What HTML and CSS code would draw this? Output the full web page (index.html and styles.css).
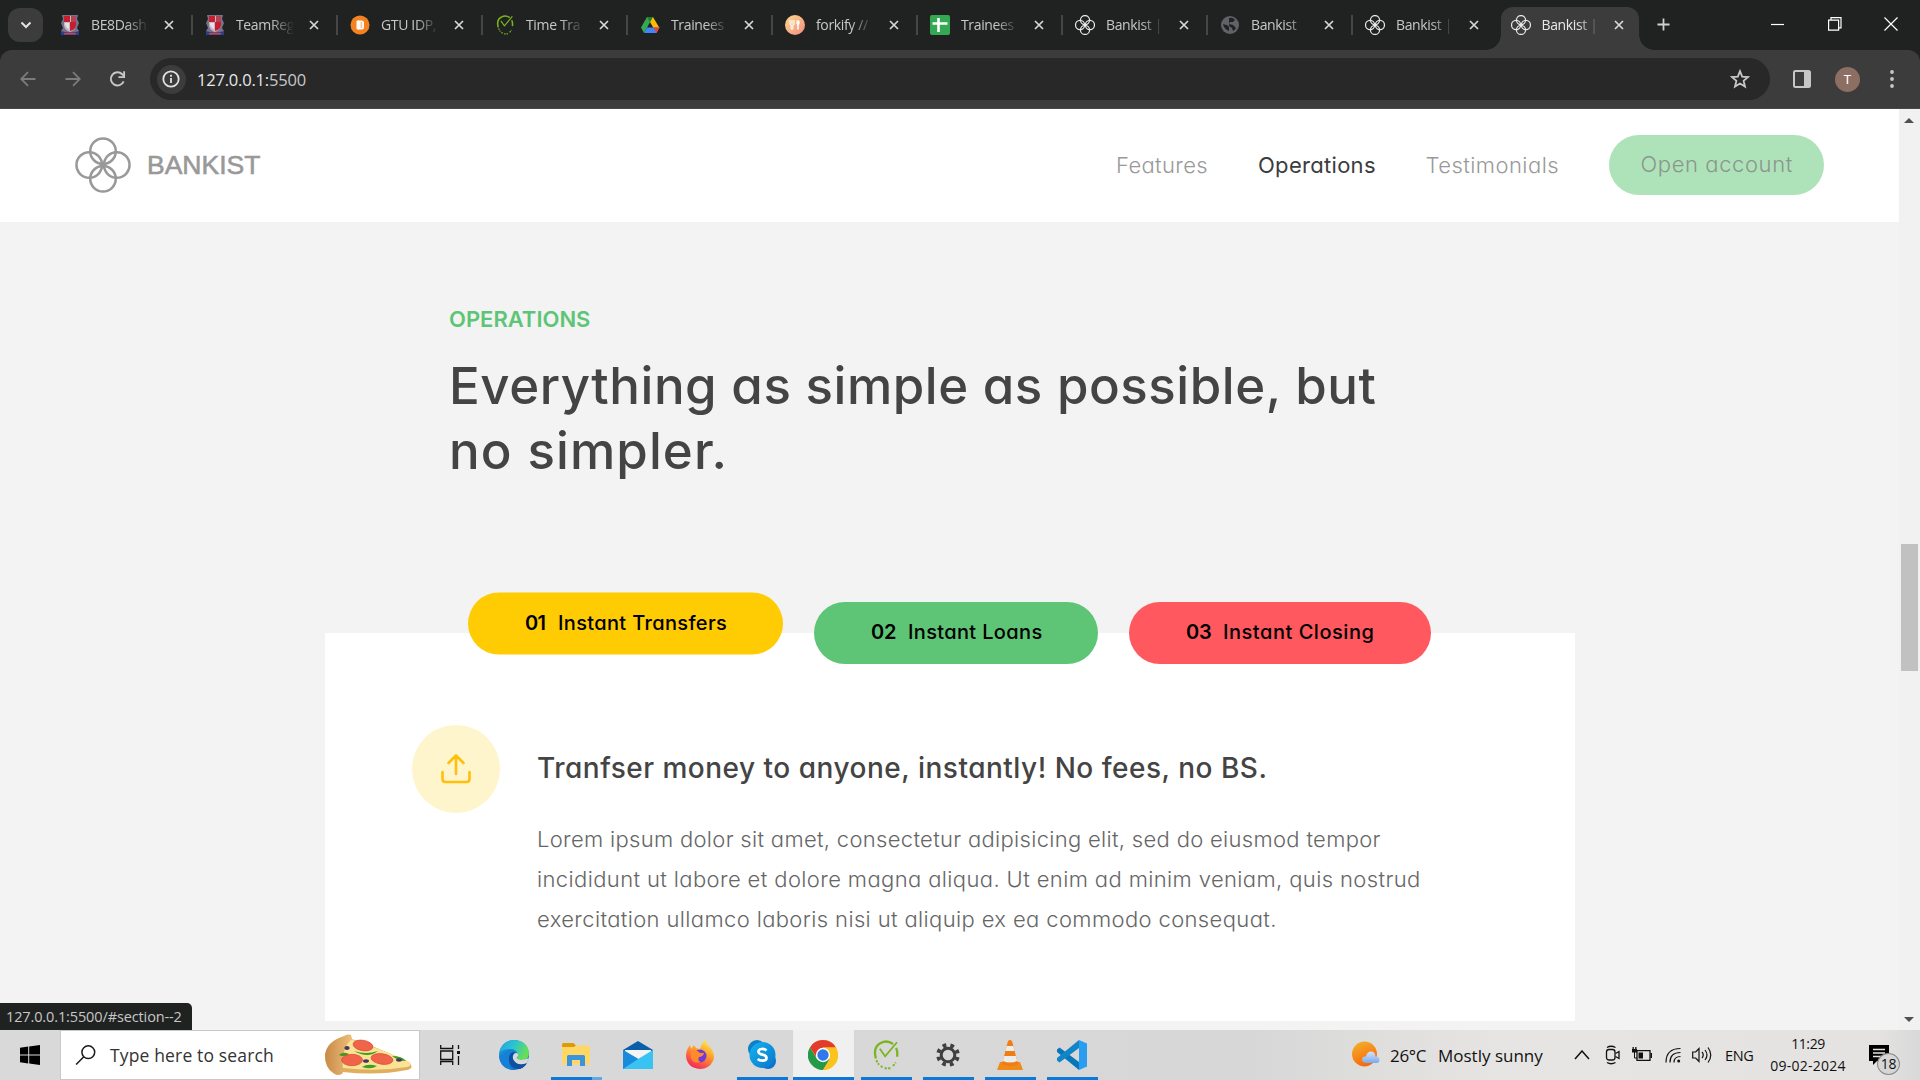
FILE: index.html
```html
<!DOCTYPE html>
<html lang="en">
<head>
<meta charset="utf-8">
<title>Bankist | When Banking meets Minimalist</title>
<link rel="stylesheet" href="styles.css">
</head>
<body>
<svg class="defs" aria-hidden="true">
  <defs>
    <symbol id="flower" viewBox="0 0 57 57"><g fill="none" stroke="currentColor"><circle cx="28.5" cy="14.5" r="13"/><circle cx="28.5" cy="42.5" r="13"/><circle cx="14.5" cy="28.5" r="13"/><circle cx="42.5" cy="28.5" r="13"/></g></symbol>
    <symbol id="x" viewBox="0 0 10 10"><path d="M1 1l8 8M9 1L1 9" stroke="currentColor" stroke-width="1.7" fill="none"/></symbol>
    <symbol id="crest" viewBox="0 0 20 20"><path d="M2 0h16l-1 4 2 4-2 5 2 3v4H1v-4l2-3-2-5 2-4z" fill="#77718c"/><path d="M4 1h12v9q0 5-6 7-6-2-6-7z" fill="#c9b6c2"/><path d="M4 1h6v6H4zM10 7h6v4q-1 4-6 5z" fill="#c3202f"/><path d="M11 1h5v6h-5z" fill="#b04455"/><path d="M5 8h4v6q-4-2-4-6z" fill="#e6e2ea"/><path d="M1 16q9 3 18 0v4H1z" fill="#25418c"/><path d="M4 18h12v1.500H4z" fill="#d3424c"/></symbol>
    <symbol id="clock" viewBox="0 0 28 34"><g fill="none" stroke="#7ab51d"><path d="M2.500 21Q-1 8 8 3.500q7-4 14 1M25.500 9q2 5 1 10" stroke-width="2.600"/><path d="M7 10l6 8.500L26.500 2.500" stroke-width="2"/><path d="M3 23l3 5M8 29.500l3 2M12.500 32h7M22 29.500l3-4" stroke-width="2.200" stroke-dasharray="2.500 1.500"/></g></symbol>
    <linearGradient id="fork" x1="0" y1="0" x2="1" y2="1"><stop offset="0" stop-color="#fbdb89"/><stop offset="1" stop-color="#f48982"/></linearGradient>
    <linearGradient id="edgeTop" x1="0" y1="0" x2="1" y2=".4"><stop offset="0" stop-color="#1aa3e0"/><stop offset=".5" stop-color="#2cc3d2"/><stop offset="1" stop-color="#66de58"/></linearGradient>
    <linearGradient id="edgeLow" x1="0" y1="0" x2="1" y2="1"><stop offset="0" stop-color="#1b9de2"/><stop offset="1" stop-color="#0f5fb5"/></linearGradient>
    <linearGradient id="fox" x1=".8" y1="0" x2=".3" y2="1"><stop offset="0" stop-color="#fff04a"/><stop offset=".45" stop-color="#ff9a2b"/><stop offset="1" stop-color="#f5225c"/></linearGradient>
    <linearGradient id="sky" x1="0" y1="0" x2="1" y2="1"><stop offset="0" stop-color="#14b4f0"/><stop offset="1" stop-color="#0a74cc"/></linearGradient>
    <linearGradient id="sun" x1="0" y1="0" x2=".4" y2="1"><stop offset="0" stop-color="#f2b52c"/><stop offset="1" stop-color="#f96a0c"/></linearGradient>
    <linearGradient id="cloud" x1="0" y1="0" x2="0" y2="1"><stop offset="0" stop-color="#d5e4fb"/><stop offset="1" stop-color="#7ba9ee"/></linearGradient>
    <linearGradient id="crust" x1="0" y1="0" x2="1" y2="0"><stop offset="0" stop-color="#c98a48"/><stop offset="1" stop-color="#eec07b"/></linearGradient>
  </defs>
</svg>

<div class="screen">
  <header class="tabstrip">
    <div class="tab-search"><svg width="12" height="8" viewBox="0 0 12 8"><path d="M1.500 1.500L6 6l4.500-4.500" fill="none" stroke="#e3e3e3" stroke-width="2"/></svg></div>
    <div class="tab"><svg class="fav"><use href="#crest"/></svg><span class="label">BE8Dash</span><svg class="close"><use href="#x"/></svg></div>
    <div class="tab"><svg class="fav"><use href="#crest"/></svg><span class="label">TeamReg</span><svg class="close"><use href="#x"/></svg></div>
    <div class="tab"><svg class="fav" viewBox="0 0 20 20"><circle cx="10" cy="10" r="9.500" fill="#f58220"/><path d="M6.500 6L9 5v10l-2.500-1z" fill="#fff"/><path d="M9 5.500h2.500q2.500 0 2.500 2.500v4q0 2.500-2.500 2.500H9z" fill="#fff"/><path d="M10.500 8h1.800M10.500 10h1.800M10.500 12h1.800" stroke="#f58220" stroke-width=".9"/></svg><span class="label">GTU IDP,</span><svg class="close"><use href="#x"/></svg></div>
    <div class="tab"><svg class="fav"><use href="#clock"/></svg><span class="label">Time Tra</span><svg class="close"><use href="#x"/></svg></div>
    <div class="tab"><svg class="fav" viewBox="0 0 20 20"><path d="M7 2L1 12.500 4 18 10 7.300z" fill="#34a853"/><path d="M7 2h6l6.500 11H13.500z" fill="#fbbc04"/><path d="M7 2l3 5.300L13 2z" fill="#188038"/><path d="M4 18l3-5.500h12.500L16.500 18z" fill="#4285f4"/><path d="M13.500 12.500h6L16.500 18z" fill="#ea4335"/></svg><span class="label">Trainees</span><svg class="close"><use href="#x"/></svg></div>
    <div class="tab"><svg class="fav" viewBox="0 0 20 20"><circle cx="10" cy="10" r="10" fill="url(#fork)"/><path d="M5 5v3.500q0 1.500 1.200 1.500V14h1.600v-4Q9 10 9 8.500V5M7 5v4" fill="none" stroke="#fff" stroke-width="1.100"/><ellipse cx="13" cy="7.500" rx="1.700" ry="2.500" fill="#fff"/><path d="M13 8v6.500" stroke="#fff" stroke-width="1.500"/></svg><span class="label">forkify //</span><svg class="close"><use href="#x"/></svg></div>
    <div class="tab"><svg class="fav" viewBox="0 0 20 20"><rect width="20" height="20" rx="2" fill="#34a853"/><path d="M2.500 8.500h15M8.500 3v14" stroke="#fff" stroke-width="2.600"/></svg><span class="label">Trainees</span><svg class="close"><use href="#x"/></svg></div>
    <div class="tab"><svg class="fav flower"><use href="#flower"/></svg><span class="label">Bankist |</span><svg class="close"><use href="#x"/></svg></div>
    <div class="tab"><svg class="fav" viewBox="0 0 20 20"><circle cx="10" cy="10" r="9" fill="#5f6368"/><path d="M3 9q3 1 4 1l2 2v4q-5-2-6-7zM9 3q4-1 6 2l-2 2-3 0-1 2 4 1 3 3q-1 2-3 3l-1-3-3-2" fill="#202221"/></svg><span class="label">Bankist</span><svg class="close"><use href="#x"/></svg></div>
    <div class="tab last"><svg class="fav flower"><use href="#flower"/></svg><span class="label">Bankist |</span><svg class="close"><use href="#x"/></svg></div>
    <div class="tab active"><svg class="fav flower"><use href="#flower"/></svg><span class="label">Bankist |</span><svg class="close"><use href="#x"/></svg></div>
    <svg class="plus" viewBox="0 0 14 14"><path d="M7 .5v13M.5 7h13" stroke="#d0d0d0" stroke-width="1.900"/></svg>
    <div class="win">
      <svg width="14" height="14"><path d="M0 7.500h13" stroke="#fff" stroke-width="1.200"/></svg>
      <svg width="14" height="14" fill="none" stroke="#fff" stroke-width="1.200"><path d="M.6 3.100h10v10H.6zM3 3V.6h10v10.200h-2"/></svg>
      <svg width="14" height="14"><path d="M.5.5l13 13M13.500.5l-13 13" stroke="#fff" stroke-width="1.200"/></svg>
    </div>
  </header>

  <div class="toolbar">
    <svg class="nav-ic dim" viewBox="0 0 16 16"><path d="M15.500 8H1.500M8 1.200L1.200 8 8 14.800"/></svg>
    <svg class="nav-ic dim" viewBox="0 0 16 16"><path d="M.5 8h14M8 1.200L14.800 8 8 14.800"/></svg>
    <svg class="nav-ic reload" viewBox="0 0 18 18"><path d="M15.500 11.500a7 7 0 1 1-1.500-7.500l2 2" /><path d="M16 .8V7H10"/></svg>
    <div class="omnibox">
      <span class="info"><svg width="18" height="18" viewBox="0 0 18 18"><circle cx="9" cy="9" r="7.700" fill="none" stroke="#e3e3e3" stroke-width="1.800"/><path d="M9 8v5M9 4.800v1.900" stroke="#e3e3e3" stroke-width="1.800"/></svg></span>
      <span class="url">127.0.0.1:<span class="port">5500</span></span>
      <svg class="star" viewBox="0 0 20 20"><path d="M10 2.200l2.200 5.400 5.800.5-4.400 3.800 1.400 5.700-5-3.100-5 3.100 1.400-5.700L2 8.100l5.800-.5z" fill="none" stroke="#c7c7c7" stroke-width="1.800"/></svg>
    </div>
    <svg class="panel" viewBox="0 0 18 18"><rect x="1" y="1" width="16" height="16" rx="1.500" fill="none" stroke="#c7c7c7" stroke-width="2"/><path d="M11 1h6v16h-6z" fill="#c7c7c7"/></svg>
    <span class="avatar">T</span>
    <svg class="dots" viewBox="0 0 4 18" fill="#c7c7c7"><circle cx="2" cy="2" r="1.900"/><circle cx="2" cy="9" r="1.900"/><circle cx="2" cy="16" r="1.900"/></svg>
  </div>

  <div class="viewport">
    <main class="page">
      <nav class="nav">
        <svg class="logo"><use href="#flower"/></svg>
        <span class="brand">BANKIST</span>
        <div class="links">
          <a class="link features">Features</a>
          <a class="link operations">Operations</a>
          <a class="link testimonials">Testimonials</a>
          <a class="link open">Open account</a>
        </div>
      </nav>
      <section class="section">
        <h2 class="eyebrow">OPERATIONS</h2>
        <h3 class="title"><span class="t1">Everything as simple as possible, but</span><span class="t2">no simpler.</span></h3>
        <div class="card">
          <div class="tabs">
            <button class="op op1"><b>01</b><span>Instant Transfers</span></button>
            <button class="op op2"><b>02</b><span>Instant Loans</span></button>
            <button class="op op3"><b>03</b><span>Instant Closing</span></button>
          </div>
          <div class="content">
            <div class="circle"><svg width="30" height="30" viewBox="0 0 30 30" fill="none" stroke="#ffbf0a" stroke-width="2.600" stroke-linecap="round" stroke-linejoin="round"><path d="M15 20V2M7.500 9L15 1.500 22.500 9M1.500 18v7q0 3 3 3h21q3 0 3-3v-7"/></svg></div>
            <div class="copy">
              <h5 class="head">Tranfser money to anyone, instantly! No fees, no BS.</h5>
              <p class="para"><span class="p1">Lorem ipsum dolor sit amet, consectetur adipisicing elit, sed do eiusmod tempor</span><span class="p2">incididunt ut labore et dolore magna aliqua. Ut enim ad minim veniam, quis nostrud</span><span class="p3">exercitation ullamco laboris nisi ut aliquip ex ea commodo consequat.</span></p>
            </div>
          </div>
        </div>
      </section>
      <div class="status">127.0.0.1:5500/#section--2</div>
    </main>
    <div class="scrollbar">
      <svg width="10" height="5"><path d="M0 5L5 0l5 5z" fill="#505050"/></svg>
      <div class="thumb"></div>
      <svg class="down" width="10" height="5"><path d="M0 0l5 5 5-5z" fill="#505050"/></svg>
    </div>
  </div>

  <footer class="taskbar">
    <div class="start"><svg width="20" height="20" viewBox="0 0 20 20"><path d="M0 2.800L8.200 1.600v7.900H0zM9.200 1.500L20 0v9.500H9.200zM0 10.500h8.200v7.900L0 17.200zM9.200 10.500H20V20L9.200 18.500z"/></svg></div>
    <div class="search">
      <svg class="mag" viewBox="0 0 20 20" fill="none" stroke="#1a1a1a" stroke-width="1.500"><circle cx="12.800" cy="7.200" r="6.400"/><path d="M8.300 11.800L.6 19.500"/></svg>
      <span class="search-text">Type here to search</span>
      <svg class="pizza" viewBox="0 0 90 44"><path d="M20 3q9-4 7 3 14 3 58 23 6 6-2 8-30 6-64 2-6 5-10 1Q1 35 1 22 4 8 20 3z" fill="#dfae5e"/><path d="M25 6q20 5 60 23 4 4-2 5-30 5-64 1-4-17 6-29z" fill="#fbe395"/><path d="M19 4q8-5 9 2-12 10-9 34-4 4-9 0Q1 35 1 22 3 8 19 4z" fill="url(#crust)"/><g fill="#3f9d22"><path d="M15 22q4-4 10-1-4 4-10 1zM30 18q12 4 24 0-10 8-24 0zM38 34q6-4 15-1-6 4-15 1zM68 23q10 0 14 5-8 0-14-5z"/></g><g fill="#f0644a" stroke="#d8472f" stroke-width=".7"><ellipse cx="39" cy="12.500" rx="10" ry="5.200" transform="rotate(10 39 12.500)"/><ellipse cx="28" cy="27" rx="10.500" ry="5.700"/><ellipse cx="58" cy="26" rx="11" ry="5.200" transform="rotate(8 58 26)"/></g><g fill="#4a3560"><ellipse cx="23" cy="15" rx="2.700" ry="2"/><ellipse cx="42" cy="28" rx="3" ry="1.800"/><ellipse cx="75" cy="27" rx="3" ry="1.700"/></g></svg>
    </div>
    <div class="taskview"><svg width="20" height="20" viewBox="0 0 20 20" fill="none" stroke="#111" stroke-width="1.300"><path d="M.7 0v3.500h12V0M.7 20v-3.500h12V20M.7 6h12v8.500H.7zM18.500 0v4M18.500 11v9"/><path d="M17 6h3v3h-3z" fill="#111" stroke="none"/></svg></div>
    <div class="app"><svg width="30" height="30" viewBox="0 0 30 30"><circle cx="15" cy="15" r="15" fill="url(#edgeLow)"/><path d="M.5 12Q3 0 15.500 0 29 1 30 13q0 7-7 7.500-5 0-5.500-2.500 2-1 1.500-4-2-5-8-5Q5 9 .5 12z" fill="url(#edgeTop)"/><path d="M10 18q0-6 5-8-5-1-10 3-5 4-5 3 1 13 14 14-5-4-4-12z" fill="#1680d8"/><path d="M10 17q-1 12 11 12 5-2 7-6-12 4-14-6 0-3 2-5-5 0-6 5z" fill="#0d4fa0"/><path d="M17.500 18q3 4 12.500 0l-2 5q-10 4-14-4-1-5 3-6 3 0 2 3z" fill="#d9d9d9"/></svg></div>
    <div class="app open more"><svg width="28" height="24" viewBox="0 0 28 24"><path d="M0 1.500Q0 0 1.500 0h10L14 2.500V5H0z" fill="#dd9c05"/><path d="M0 4h12l2-1.500h12.500Q28 2.500 28 4v17.500H0z" fill="#ffd767"/><path d="M5 23V13.500Q5 12 6.500 12h15q1.500 0 1.500 1.500V23h-5v-6h-8v6z" fill="#3a94dc"/></svg></div>
    <div class="app"><svg width="30" height="28" viewBox="0 0 30 28"><path d="M0 9L15 0l15 9v3H0z" fill="#0a5fab"/><path d="M2 9h26v9H2z" fill="#f4f4f4"/><path d="M0 9l30 17.500V28H0z" fill="#1d9de6"/><path d="M30 9L0 27v1h30z" fill="#39c3f2"/><path d="M0 9l15 9L0 28z" fill="#1a8bdc"/></svg></div>
    <div class="app"><svg width="28" height="30" viewBox="0 0 28 30"><path d="M14 29Q1 28 0 16 0 10 4 5l1 4 3-4 2 3 4 1q2-7 6-9 0 4 4 7 6 8 3 14-4 8-13 8z" fill="url(#fox)"/><circle cx="14" cy="16" r="6.500" fill="#7139d6"/><path d="M5 12q6-3 9 1l4 0q-1 4-5 4-2 4 2 5-8 2-10-4z" fill="#ff8a2a"/></svg></div>
    <div class="app open"><svg width="28" height="30" viewBox="0 0 28 30"><circle cx="9" cy="9" r="9" fill="#0d7fc6"/><circle cx="20" cy="21" r="8" fill="#0a74cc"/><circle cx="14.500" cy="15" r="13" fill="url(#sky)"/><path d="M18.500 10.500q-2-2-5-1.500-3.500.7-3 3 .4 2 4 2.700 4 .8 4 3.300 0 2.500-4 2.700-3 0-4.800-1.700" fill="none" stroke="#fff" stroke-width="2.700"/></svg></div>
    <div class="app open current"><svg width="30" height="30" viewBox="0 0 30 30"><circle cx="15" cy="15" r="15" fill="#fcc31e"/><path d="M2 7.500Q6 0 15 0t13 7.500H15L9 18z" fill="#e33b2e"/><path d="M2 7.500Q-3 16 3 24q5 6 12 6l7-11H9z" fill="#23994a"/><path d="M15 7.500h13q5 11-2 18-5 5-11 4.500L21.500 19z" fill="#fcc31e"/><circle cx="15" cy="15" r="7.200" fill="#fff"/><circle cx="15" cy="15" r="5.700" fill="#3079ea"/></svg></div>
    <div class="app open"><svg width="28" height="30"><use href="#clock"/></svg></div>
    <div class="app open"><svg width="24" height="24" viewBox="0 0 24 24" fill="none" stroke="#3f3f3f"><circle cx="12" cy="12" r="6.800" stroke-width="3"/><circle cx="12" cy="12" r="9.800" stroke-width="4" stroke-dasharray="3.700 3.997" transform="rotate(12 12 12)"/></svg></div>
    <div class="app open"><svg width="26" height="30" viewBox="0 0 26 30"><path d="M3 22h20l3 8H0z" fill="#f08a1d"/><path d="M11 1q2-2 4 0l6 23q-8 4-16 0z" fill="#f07c12"/><path d="M9.700 6h6.600l1.300 5H8.400zM7.100 16h11.800l1.300 5q-7 3-14.400 0z" fill="#ececec"/></svg></div>
    <div class="app open"><svg width="30" height="30" viewBox="0 0 30 30"><path d="M0 9.500L2.500 7.500 22 22v8L0 12z" fill="#0877b9"/><path d="M0 20.500l2.500 2L22 8V0L0 18z" fill="#1285c9"/><path d="M22 0l8 3.500v23L22 30z" fill="#2a9df0"/></svg></div>
    <div class="weather"><svg width="28" height="28" viewBox="0 0 28 28"><circle cx="12.500" cy="13" r="12.500" fill="url(#sun)"/><path d="M13 22q-3-1-3-3 0-4 4-3.500 1-5 5-5t4.500 5q4 0 4 3.500 0 3-3 3z" fill="url(#cloud)"/></svg><span class="temp">26°C</span><span class="sunny">Mostly sunny</span></div>
    <div class="tray">
      <svg class="chev" width="16" height="10" viewBox="0 0 16 10"><path d="M1 9l7-8 7 8" fill="none" stroke="#111" stroke-width="1.500"/></svg>
      <svg class="cam" width="16" height="20" viewBox="0 0 16 20" fill="none" stroke="#111" stroke-width="1.300"><rect x="1.500" y="4.500" width="8.500" height="10.500" rx="2.500"/><path d="M10.500 8.500l3.500-2v7l-3.500-2M2 2.500q4-2.500 8.500 0M2 17.500q4 2.500 8.500 0"/></svg>
      <svg class="bat" width="20" height="16" viewBox="0 0 20 16"><path d="M5 3.700h13v9.600H5z" fill="none" stroke="#111" stroke-width="1.300"/><path d="M6.500 5.500H11v6H6.500zM18.500 6H20v5h-1.500zM0 2h5v3.500H0zM.5 0h1.300v2H.5zM3.200 0h1.300v2H3.200z" fill="#111"/><path d="M2.500 5v6H5" fill="none" stroke="#111"/></svg>
      <svg class="wifi" width="16" height="16" viewBox="0 0 16 16" fill="none" stroke="#111" stroke-width="1.200"><path d="M1 15.500Q1 1.500 15.500 1.500M5 15.500Q5 5.500 15.500 5.500M9 15.500Q9 9.500 15.500 9.500"/><circle cx="13.700" cy="14" r="1.500" fill="#111" stroke="none"/></svg>
      <svg class="vol" width="20" height="18" viewBox="0 0 20 18" fill="none" stroke="#111" stroke-width="1.200"><path d="M.7 6h3L7 2.500v13L3.700 12h-3zM10 6q2.500 3 0 6M13 4q4 5 0 10M16 1.500q5.500 7.500 0 15"/></svg>
      <span class="eng">ENG</span>
      <span class="clock"><span class="time">11:29</span><span class="date">09-02-2024</span></span>
      <span class="notes"><svg width="20" height="20" viewBox="0 0 20 20"><path d="M0 0h20v16H8l-4 4v-4H0z" fill="#000"/><path d="M4 4.500h12M4 8h12M4 11.500h8" stroke="#e4e3e2" stroke-width="1.300"/></svg><span class="badge">18</span></span>
    </div>
  </footer>
</div>
</body>
</html>
```
FILE: styles.css
```css
* { box-sizing: border-box; margin: 0; padding: 0; }
body { width: 1920px; height: 1080px; overflow: hidden; font-family: "Open Sans", "Noto Sans", sans-serif; }
.defs { position: absolute; width: 0; height: 0; }
svg { display: block; flex: none; }
.screen { display: flex; flex-direction: column; width: 1920px; height: 1080px; background: #202221; }

/* tab strip */
.tabstrip { display: flex; align-items: flex-start; height: 50px; padding-left: 8px; color: #c7c7c7; }
.tab-search { display: flex; align-items: center; justify-content: center; width: 35px; height: 34px; margin: 8px 5px 0 0; border-radius: 12px; background: #3c3c3c; }
.tab { position: relative; display: flex; align-items: center; width: 145px; height: 50px; padding-left: 12px; flex: none; }
.tab::after { content: ""; position: absolute; right: 0; top: 15px; width: 2px; height: 20px; background: #444746; }
.tab.last::after { display: none; }
.fav { width: 20px; height: 20px; }
.flower { color: #e8e8e8; stroke-width: 3.5; }
.label { width: 58px; margin-left: 11px; overflow: hidden; white-space: nowrap; font-size: 14px; line-height: 20px; letter-spacing: -.35px; -webkit-mask-image: linear-gradient(90deg, #000 60%, transparent); mask-image: linear-gradient(90deg, #000 60%, transparent); }
.close { width: 10px; height: 10px; margin-left: 15px; color: #d8d8d8; }
.tab.active { width: 138px; height: 43px; margin: 7px 0 0 3px; padding: 0 0 7px 9.5px; border-radius: 12px 12px 0 0; background: #3c3c3c; color: #e8e8e8; }
.active .close { margin-left: 14px; }
.tab.active::before, .tab.active::after { content: ""; position: absolute; top: auto; bottom: 0; width: 15px; height: 15px; }
.tab.active::before { left: -15px; background: radial-gradient(circle at 0 0, transparent 14.500px, #3c3c3c 15px); }
.tab.active::after { right: -15px; background: radial-gradient(circle at 100% 0, transparent 14.500px, #3c3c3c 15px); }
.plus { width: 13px; height: 13px; margin: 18px 0 0 18px; }
.win { display: flex; gap: 42.5px; margin: 17px 22px 0 auto; }

/* toolbar */
.toolbar { display: flex; align-items: center; height: 59px; padding: 0 26px 0 20px; background: #3c3c3c; border-radius: 12px 12px 0 0; border-bottom: 1px solid #4b4647; }
.nav-ic { width: 16px; height: 16px; margin-right: 29px; fill: none; stroke: #c7c7c7; stroke-width: 2; }
.nav-ic.dim { stroke: #7b7b7b; stroke-width: 1.8; }
.nav-ic.reload { width: 17px; height: 18px; margin: 0 24px 0 -1px; }
.omnibox { display: flex; align-items: center; width: 1620px; height: 42px; padding: 0 20px 0 6.5px; border-radius: 21px; background: #282828; }
.info { display: flex; align-items: center; justify-content: center; width: 29px; height: 29px; border-radius: 50%; background: #3c3c3c; }
.url { margin-left: 11.5px; font-size: 16.5px; letter-spacing: -.2px; color: #e8e8e8; }
.port { color: #c7c7c7; }
.star { width: 20px; height: 20px; margin-left: auto; }
.panel { width: 18px; height: 18px; margin-left: 23px; }
.avatar { width: 25px; height: 25px; margin-left: 24px; border-radius: 50%; background: #8d6e63; color: #fff; font: 13px/25px Roboto, sans-serif; text-align: center; }
.dots { width: 4px; height: 18px; margin-left: auto; }

/* web page */
.viewport { display: flex; height: 921px; }
.page { position: relative; width: 1899px; background: #f3f3f3; overflow: hidden; font-family: Inter, sans-serif; font-feature-settings: "cv11"; color: #444; }
.nav { display: flex; align-items: center; height: 113px; padding: 0 75px 1px; background: #fff; }
.logo { width: 56px; height: 56px; color: #999; stroke-width: 2.6; }
.brand { margin-left: 16px; font: 26.5px "Liberation Sans", sans-serif; color: #999; -webkit-text-stroke: .6px #999; }
.links { display: flex; align-items: center; margin-left: auto; white-space: nowrap; }
.link { font-size: 22px; font-weight: 300; line-height: 59px; color: #999; letter-spacing: .35px; }
.features { width: 142px; }
.operations { width: 167.5px; font-weight: 400; color: #3c3c3c; letter-spacing: .3px; }
.testimonials { width: 183.5px; letter-spacing: .45px; }
.open.link { width: 215px; height: 60px; padding-left: 31.5px; border-radius: 30px; background: #aee3ba; color: #8a968d; letter-spacing: .6px; }
.section { display: flex; flex-direction: column; padding-top: 82px; }
.eyebrow { margin-left: 449px; font-size: 22px; line-height: 30px; font-weight: 600; color: #5ec576; }
.title { display: flex; flex-direction: column; margin: 19px 0 0 449px; font-size: 51px; line-height: 65px; font-weight: 500; white-space: nowrap; }
.t1 { letter-spacing: .53px; }
.t2 { letter-spacing: 1.1px; }
.card { display: flex; flex-direction: column; width: 1250px; height: 388px; margin: 150px 0 0 325px; background: #fff; }
.tabs { display: flex; gap: 31px; margin: -31px 0 0 143px; }
.op { display: flex; align-items: center; height: 61.5px; padding: 0 0 2px 57px; border: 0; border-radius: 31px; font: 500 20px Inter, sans-serif; font-feature-settings: "cv11"; text-align: left; white-space: nowrap; color: #000; }
.op b { width: 33px; font-weight: 600; letter-spacing: -.8px; }
.op1 { width: 315px; padding-bottom: 1px; background: #ffcb03; transform: translateY(-9.5px); letter-spacing: .35px; }
.op2 { width: 284px; background: #5ec576; letter-spacing: .35px; }
.op3 { width: 302px; background: #ff585f; letter-spacing: .53px; }
.op2 b, .op3 b { width: 37px; letter-spacing: -.2px; }
.content { display: flex; gap: 37px; margin: 61.5px 0 0 87px; }
.circle { display: flex; align-items: center; justify-content: center; width: 88px; height: 88px; border-radius: 50%; background: #fff5cd; }
.head { font-size: 28px; line-height: 86px; font-weight: 500; letter-spacing: .5px; white-space: nowrap; }
.para { display: flex; flex-direction: column; margin-top: 7.5px; font-size: 22px; line-height: 40.3px; font-weight: 300; color: #666; white-space: nowrap; }
.p1 { letter-spacing: .31px; }
.p2 { letter-spacing: .38px; }
.p3 { letter-spacing: .37px; }
.status { position: absolute; left: 0; bottom: 0; width: 192px; height: 27px; padding-left: 6px; border-radius: 0 5px 0 0; background: #202221; color: #c7c7c7; font: 14.5px/27px "Open Sans", sans-serif; letter-spacing: -.12px; white-space: nowrap; }
.scrollbar { display: flex; flex-direction: column; align-items: center; width: 21px; padding: 9px 1px 8px 0; background: #f1f1f1; }
.thumb { width: 17px; height: 127px; margin-top: 421px; background: #c1c1c1; }
.down { margin-top: auto; }

/* taskbar */
.taskbar { display: flex; height: 50px; background: linear-gradient(90deg, #d9d9d9 0, #d7d7d7 1250px, #e6e5e3 1500px, #e4e3e2 1880px, #d8d8d8 1920px); color: #111; }
.start { display: flex; align-items: center; justify-content: center; width: 60px; }
.search { display: flex; align-items: center; width: 360px; padding: 0 5px 0 14px; background: #fff; border: 1px solid #c8c8c8; }
.mag { width: 21px; height: 20px; }
.search-text { margin-left: 14px; font-size: 17.5px; letter-spacing: .15px; color: #333; white-space: nowrap; }
.pizza { width: 90px; height: 44px; margin-left: auto; }
.taskview { display: flex; align-items: center; justify-content: center; width: 60px; margin-right: 2.5px; }
.app { display: flex; align-items: center; justify-content: center; position: relative; width: 62px; flex: none; }
.app.open::after { content: ""; position: absolute; left: 6px; bottom: 0; width: 51px; height: 3px; background: #0a79d8; }
.app.more::after { background: linear-gradient(90deg, #0a79d8 41px, #62a8e4 41px); }
.app.current { width: 61px; margin-right: 1px; background: #f0f0f0; }
.app.current::after { left: 0; width: 61px; }
.weather { display: flex; align-items: center; width: 222px; margin-left: 249.5px; font-size: 17px; white-space: nowrap; }
.temp { width: 48px; margin-left: 10px; letter-spacing: -.3px; }
.sunny { letter-spacing: 0; }
.tray { display: flex; align-items: center; width: 346px; }
.cam { margin-left: 15px; }
.bat { margin-left: 11px; }
.wifi { margin-left: 13px; }
.vol { margin-left: 11px; }
.eng { width: 30px; margin-left: 13px; font-size: 14.5px; letter-spacing: -.4px; }
.clock { display: flex; flex-direction: column; align-items: center; width: 78px; margin-left: 14px; font-size: 14px; line-height: 22.5px; white-space: nowrap; }
.time { letter-spacing: -.4px; }
.date { letter-spacing: .25px; }
.notes { position: relative; margin-left: 22px; }
.badge { position: absolute; left: 8px; top: 8px; width: 23px; height: 22px; border: 1px solid #8b8b8b; border-radius: 50%; background: #d6d6d6; font-size: 14px; line-height: 20px; text-align: center; letter-spacing: -.3px; }
```
